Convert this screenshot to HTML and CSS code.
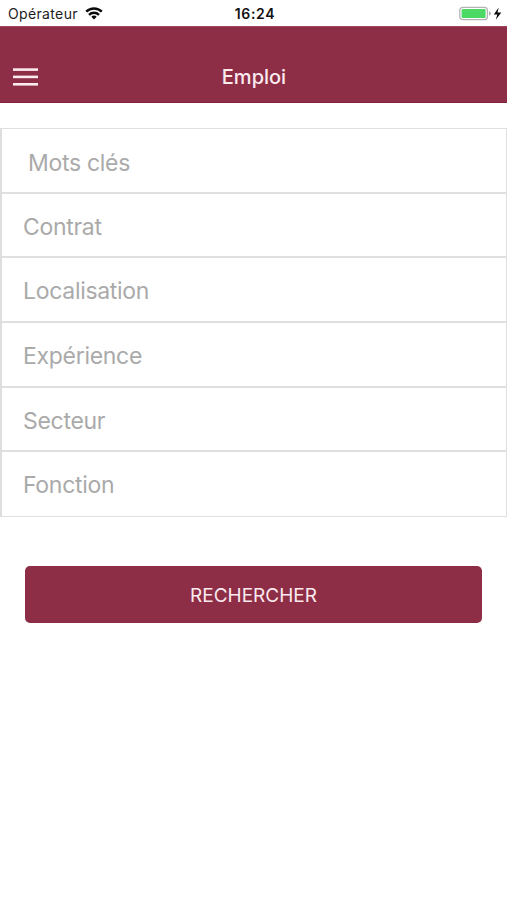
FILE: index.html
```html
<!DOCTYPE html>
<html lang="fr">
<head>
<meta charset="utf-8">
<title>Emploi</title>
<link rel="stylesheet" href="styles.css">
</head>
<body>
<div class="status">
  <div class="carrier"><span>Opérateur</span>
    <svg class="wifi" width="18" height="13" viewBox="0 0 18 13" fill="none" stroke="#0a0a0a" stroke-width="2.4"><path d="M1.2 4.6a11.2 11.2 0 0 1 15.6 0"/><path d="M4 7.8a7.2 7.2 0 0 1 10 0"/><path d="M9 12.4 6.3 9.7a4 4 0 0 1 5.4 0Z" fill="#0a0a0a" stroke="none"/></svg>
  </div>
  <time class="clock">16:24</time>
  <div class="power">
    <svg width="43" height="15" viewBox="0 0 43 15"><rect x=".8" y="1.3" width="27.6" height="12.4" rx="3" fill="#fff" stroke="#b4b4b4" stroke-width="1.3"/><rect x="2.6" y="3.1" width="24" height="8.8" rx="1" fill="#4cd964"/><path d="M30 5.3q1.8.6 1.8 2.2T30 9.7Z" fill="#aaa"/><path d="M39.7 1.5 34.8 8.5h3.5l-1.5 5.2 5.5-7.1h-3.8Z" fill="#0a0a0a"/></svg>
  </div>
</div>
<header class="bar">
  <svg class="menu" width="25" height="19" viewBox="0 0 25 19" fill="#fbeaee"><rect y=".3" width="25" height="2.6"/><rect y="7.6" width="25" height="2.6"/><rect y="15" width="25" height="2.6"/></svg>
  <h1>Emploi</h1>
</header>
<main>
  <div class="fields">
    <div class="field field-input"><span>Mots clés</span></div>
    <div class="field"><span>Contrat</span></div>
    <div class="field"><span>Localisation</span></div>
    <div class="field"><span>Expérience</span></div>
    <div class="field"><span>Secteur</span></div>
    <div class="field"><span>Fonction</span></div>
  </div>
  <button class="search">RECHERCHER</button>
</main>
</body>
</html>
```
FILE: styles.css
```css
* { box-sizing: border-box; }
body {
  margin: 0;
  min-height: 900px;
  background: #fff;
  font-family: Inter, "Liberation Sans", sans-serif;
}
.status {
  display: grid;
  grid-template-columns: 1fr auto 1fr;
  align-items: center;
  height: 26px;
  padding: 1px 5px 0 8px;
  color: #1c1c1c;
  font-size: 14px;
}
.carrier { display: flex; align-items: center; gap: 7px; letter-spacing: 0.35px; }
.wifi { margin-top: -1px; }
.clock { font-weight: 600; color: #111; letter-spacing: 0.65px; }
.power { display: flex; justify-content: flex-end; }
.bar {
  display: grid;
  grid-template-columns: 1fr auto 1fr;
  align-items: center;
  height: 77px;
  padding: 25px 13px 0;
  background: #8e2d46;
  border-top: 1px solid #a0485e;
  border-bottom: 1px solid #86203b;
}
h1 {
  margin: 0;
  padding-left: 1px;
  color: #fbeaee;
  font-size: 20px;
  font-weight: 500;
  line-height: 24px;
}
.fields {
  display: grid;
  grid-template-rows: repeat(5, 64.7px) 63.5px;
  margin-top: 25px;
  border: 1px solid #e0e0e0;
  border-left: 2px solid #dedede;
}
.field {
  display: flex;
  align-items: center;
  padding: 3px 21px 0;
  border-bottom: 2px solid #dfdfdf;
  color: #aaa;
  font-size: 23px;
  letter-spacing: -0.3px;
}
.field:last-child { border-bottom: 0; padding-top: 2px; }
.field-input { padding: 5px 26px 0; }
.search {
  display: block;
  width: 457px;
  height: 57px;
  margin: 49px auto 0 25px;
  padding: 2px 0 0;
  border: 0;
  border-radius: 5px;
  background: #8e2d46;
  color: #fbeaee;
  font: 400 19px Inter, "Liberation Sans", sans-serif;
}
```
